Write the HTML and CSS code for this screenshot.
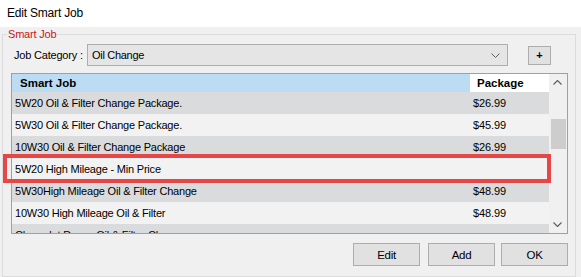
FILE: index.html
```html
<!DOCTYPE html>
<html>
<head>
<meta charset="utf-8">
<link rel="stylesheet" href="styles.css">
</head>
<body>
<div class="window">
  <div class="titlebar">Edit Smart Job</div>
  <div class="client">
    <fieldset class="group">
      <legend class="legend">Smart Job</legend>
      <div class="category-row">
        <span class="cat-label">Job Category :</span>
        <div class="combo">
          <span class="combo-text">Oil Change</span>
          <svg class="combo-arrow" width="9" height="5" viewBox="0 0 9 5"><path d="M0.5 0.5 L4.5 4.5 L8.5 0.5" fill="none" stroke="#606060" stroke-width="1"/></svg>
        </div>
        <button class="plus">+</button>
      </div>
      <div class="grid-wrap">
        <div class="grid">
          <div class="table">
            <div class="hdr">
              <div class="c-job hdr-job">Smart Job</div>
              <div class="c-pkg hdr-pkg">Package</div>
            </div>
            <div class="row dark"><div class="c-job">5W20 Oil &amp; Filter Change Package.</div><div class="c-pkg">$26.99</div></div>
            <div class="row light"><div class="c-job">5W30 Oil &amp; Filter Change Package.</div><div class="c-pkg">$45.99</div></div>
            <div class="row dark"><div class="c-job">10W30 Oil &amp; Filter Change Package</div><div class="c-pkg">$26.99</div></div>
            <div class="row light"><div class="c-job">5W20 High Mileage - Min Price</div><div class="c-pkg"></div></div>
            <div class="row dark"><div class="c-job">5W30High Mileage Oil &amp; Filter Change</div><div class="c-pkg">$48.99</div></div>
            <div class="row light"><div class="c-job">10W30 High Mileage Oil &amp; Filter</div><div class="c-pkg">$48.99</div></div>
            <div class="row dark"><div class="c-job">Chevrolet Dexos Oil &amp; Filter Change</div><div class="c-pkg"></div></div>
          </div>
          <div class="scroll">
            <div class="sb-btn">
              <svg width="9" height="5" viewBox="0 0 9 5"><path d="M0.5 4.5 L4.5 0.5 L8.5 4.5" fill="none" stroke="#606060" stroke-width="1.2"/></svg>
            </div>
            <div class="sb-track"><div class="sb-thumb"></div></div>
            <div class="sb-btn">
              <svg width="9" height="5" viewBox="0 0 9 5"><path d="M0.5 0.5 L4.5 4.5 L8.5 0.5" fill="none" stroke="#606060" stroke-width="1.2"/></svg>
            </div>
          </div>
        </div>
        <div class="highlight"></div>
      </div>
      <div class="buttons">
        <button class="btn btn-edit">Edit</button>
        <button class="btn btn-add">Add</button>
        <button class="btn">OK</button>
      </div>
    </fieldset>
  </div>
</div>
</body>
</html>
```
FILE: styles.css
```css
* { box-sizing: border-box; }
html, body { margin: 0; padding: 0; }
body {
  width: 581px;
  height: 277px;
  overflow: hidden;
  font-family: "Liberation Sans", Arial, sans-serif;
  font-size: 11px;
  color: #000;
  background: #f0f0f0;
}
.window { width: 581px; height: 277px; display: flex; flex-direction: column; }
.titlebar {
  height: 27px;
  background: #fff;
  font-size: 12px;
  letter-spacing: -0.2px;
  line-height: 27px;
  padding-left: 7px;
  color: #000;
  flex: none;
}
.client { flex: 1; background: #f0f0f0; padding: 1px 5px 0 2px; }
.group {
  margin: 0;
  border: 1px solid #dcdcdc;
  padding: 3px 7px 9px 8px;
  min-width: 0;
  height: 249px;
}
.legend {
  color: #c8161e;
  padding: 0 1px;
  margin-left: -4px;
  font-size: 11px;
  letter-spacing: -0.2px;
  line-height: 13px;
}
.category-row { display: flex; align-items: center; height: 22px; margin-bottom: 7px; }
.cat-label { width: 76px; padding-left: 3px; letter-spacing: -0.2px; flex: none; }
.combo {
  width: 421px;
  height: 22px;
  background: #e5e5e5;
  border: 1px solid #adadad;
  display: flex;
  align-items: center;
  justify-content: space-between;
  padding: 0 7px 0 4px;
  flex: none;
}
.combo-text { letter-spacing: -0.3px; font-size: 11px; }
.plus {
  margin-left: 20px;
  width: 23px;
  height: 19px;
  background: #e1e1e1;
  border: 1px solid #adadad;
  font-family: "Liberation Sans", Arial, sans-serif;
  font-size: 11px;
  font-weight: bold;
  padding: 0;
  line-height: 15px;
  color: #000;
}
.grid-wrap { position: relative; }
.grid {
  height: 161px;
  border: 1px solid #a0a0a0;
  display: flex;
  overflow: hidden;
  background: #f0f0f0;
}
.table { width: 537px; flex: none; }
.hdr { display: flex; height: 18px; font-weight: bold; font-size: 11.5px; }
.c-job { width: 458px; flex: none; padding-left: 3px; white-space: nowrap; overflow: hidden; }
.c-pkg { width: 79px; flex: none; padding-left: 3px; }
.hdr-job { background: #bcdcf4; padding-left: 8px; line-height: 18px; }
.hdr-pkg { background: #fff; padding-left: 7px; line-height: 18px; }
.row { display: flex; height: 22px; line-height: 22px; letter-spacing: -0.2px; }
.row .c-pkg { letter-spacing: -0.1px; }
.dark { background: #dadbdc; }
.light { background: #f2f2f2; }
.scroll { width: 17px; flex: none; display: flex; flex-direction: column; background: #f0f0f0; }
.sb-btn { height: 17px; display: flex; align-items: center; justify-content: center; flex: none; }
.sb-track { flex: 1; }
.sb-thumb { margin: 28px 0 0 2px; width: 15px; height: 30px; background: #cdcdcd; }
.highlight {
  position: absolute;
  left: -8px;
  top: 81px;
  width: 548px;
  height: 29px;
  border: 4px solid #e64646;
  pointer-events: none;
}
.buttons { display: flex; justify-content: flex-end; margin-top: 9px; }
.btn {
  width: 67px;
  height: 23px;
  background: #e1e1e1;
  border: 1px solid #adadad;
  font-family: "Liberation Sans", Arial, sans-serif;
  font-size: 11.5px;
  letter-spacing: -0.3px;
  color: #000;
  padding: 0;
}
.btn-edit { margin-right: 8px; }
.btn-add { margin-right: 6px; }
```
